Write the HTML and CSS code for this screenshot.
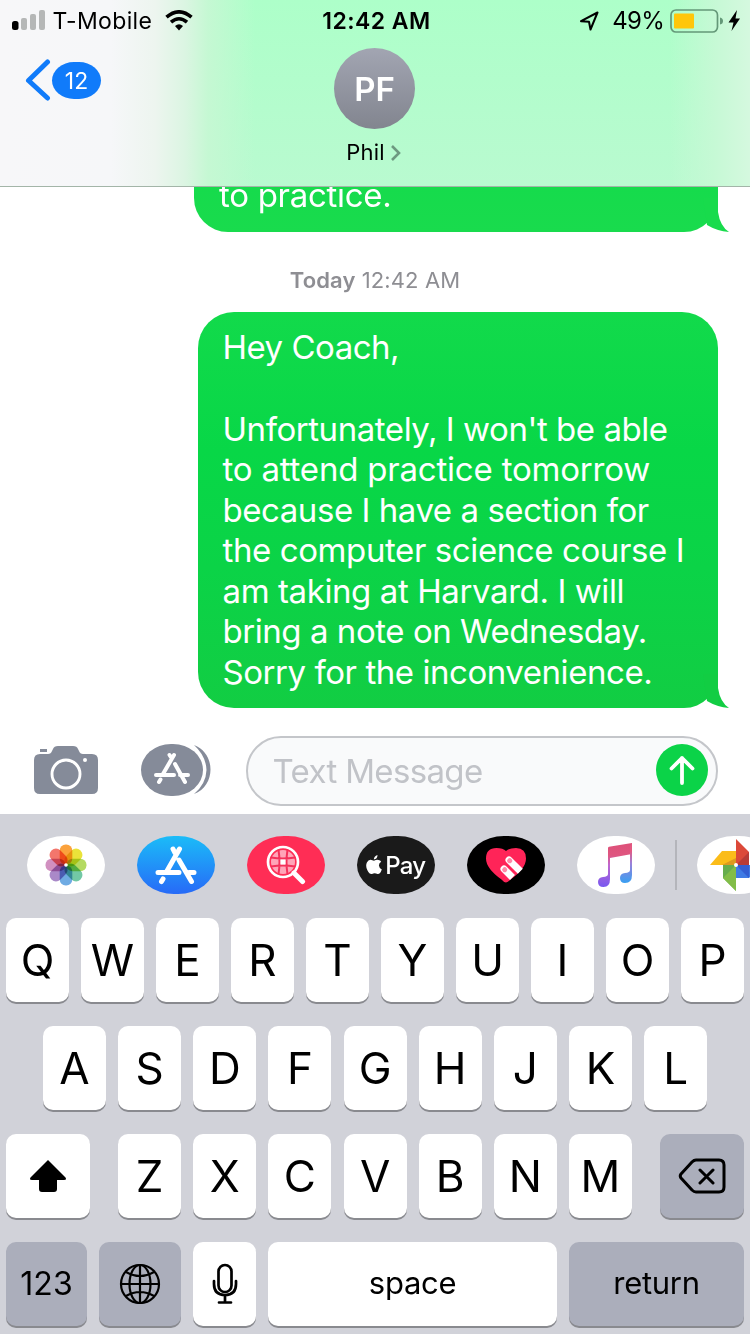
FILE: index.html
```html
<!DOCTYPE html>
<html lang="en">
<head>
<meta charset="utf-8">
<title>Phil</title>
<link rel="stylesheet" href="styles.css">
</head>
<body>
<div class="phone">
  <header class="header">
    <div class="status">
      <div class="status-left">
        <svg class="signal" width="34" height="21" viewBox="0 0 34 21"><rect x="0" y="11" width="6.500" height="9" rx="2.500" fill="#000"/><g fill="#b5b7b7"><rect x="9" y="8" width="6" height="12" rx="2"/><rect x="18" y="4" width="6" height="16" rx="2"/><rect x="27" y="0" width="6" height="20" rx="2"/></g></svg>
        <span class="carrier">T-Mobile</span>
        <svg width="28" height="21" viewBox="0 0 28 21"><g fill="none" stroke="#000" stroke-width="3.600"><path d="M1.500 7.200Q14-3.500 26.500 7.200"/><path d="M6 12.200Q14 5.300 22 12.200"/></g><path d="M10 16Q14 12.500 18 16L14 20.500Z"/></svg>
      </div>
      <span class="clock">12:42 AM</span>
      <div class="status-right">
        <svg class="location" width="19" height="20" viewBox="0 0 19 20" fill="none" stroke="#000" stroke-width="2" stroke-linejoin="round"><path d="M1 10.200 17.500 1.500 10.500 18.500 9 10.700Z"/></svg>
        <span class="percent">49%</span>
        <svg width="71" height="24" viewBox="0 0 71 24"><rect x="1" y="1" width="46.500" height="22" rx="5" fill="none" stroke="#649878" stroke-width="1.700"/><rect x="4" y="4.500" width="20" height="15" rx="1" fill="#ffc60a"/><path d="M50 8.500q3 .5 3 3.500t-3 3.500Z" fill="#649878"/><path d="M67 1 58.500 13.500H63.500L61.500 22 70 9.500H65.500Z" fill="#000"/></svg>
      </div>
    </div>
    <div class="nav">
      <div class="back">
        <svg width="26" height="43" viewBox="0 0 26 43" fill="none" stroke="#107bfa" stroke-width="5" stroke-linecap="round" stroke-linejoin="round"><path d="M22.500 3 3.500 21.500 22.500 39"/></svg>
        <span class="badge">12</span>
      </div>
      <div class="contact">
        <div class="avatar">PF</div>
        <div class="name">Phil<svg width="12" height="18" viewBox="0 0 12 18" fill="none" stroke="#6d9980" stroke-width="2.600"><path d="M2 3 9 10 2 17"/></svg></div>
      </div>
    </div>
  </header>

  <main class="thread">
    <div class="bubble previous">
      <p class="line prev-line">to practice.</p>
      <svg class="tail" width="26" height="34" viewBox="0 0 26 34"><path d="M0 0H15V14Q17 28 26 34Q14 33 4 27Z" fill="#18db4c"/></svg>
    </div>
    <div class="stamp"><b>Today</b> 12:42 AM</div>
    <div class="bubble current">
      <p class="line l1">Hey Coach,</p>
      <p class="line">&nbsp;</p>
      <p class="line">Unfortunately, I won't be able</p>
      <p class="line l3">to attend practice tomorrow</p>
      <p class="line">because I have a section for</p>
      <p class="line l5">the computer science course I</p>
      <p class="line l5">am taking at Harvard. I will</p>
      <p class="line">bring a note on Wednesday.</p>
      <p class="line">Sorry for the inconvenience.</p>
      <svg class="tail" width="26" height="34" viewBox="0 0 26 34"><path d="M0 0H15V14Q17 28 26 34Q14 33 4 27Z" fill="#12cd43"/></svg>
    </div>
  </main>

  <section class="composer">
    <svg class="camera" width="64" height="48" viewBox="0 0 64 48"><path d="M6 3h7v3H6ZM6 8h8q3 0 4-3l1-2q1-3 5-3h15q4 0 5 3l1 2q1 3 4 3h9q6 0 6 6v28q0 6-6 6H6q-6 0-6-6V14q0-6 6-6Z" fill="#858b99"/><circle cx="32" cy="28" r="14" fill="none" stroke="#fff" stroke-width="2.900"/><circle cx="51" cy="14" r="2" fill="#fff"/></svg>
    <svg class="apps" width="70" height="52" viewBox="0 0 70 52"><path d="M53 1C75 9 75 42 53 50Q65 40 65.500 26Q65 12 53 1Z" fill="#858b99"/><rect width="62" height="52" rx="30" ry="26" fill="#858b99"/><g stroke="#fff" stroke-width="4" stroke-linecap="round"><path d="M33 11 22 30M19.500 35.500 18 38M28.500 11l2 3M34 20l10 18M15 31H33M39 31H47"/></g></svg>
    <div class="field"><span class="placeholder">Text Message</span>
      <span class="send"><svg width="26" height="30" viewBox="0 0 26 30" fill="none" stroke="#fff" stroke-width="3.800" stroke-linecap="round" stroke-linejoin="round"><path d="M13 28V3M2.500 13.500 13 3l10.500 10.500"/></svg></span>
    </div>
  </section>

  <section class="keyboard">
    <div class="strip">
      <div class="app white"><svg width="42" height="42" viewBox="-21 -21 42 42"><g class="petals"><rect x="-6.300" y="-20.500" width="12.600" height="20" rx="6" fill="#fba23c"/><rect x="-6.300" y="-20.500" width="12.600" height="20" rx="6" fill="#eae33a" transform="rotate(45)"/><rect x="-6.300" y="-20.500" width="12.600" height="20" rx="6" fill="#b4da62" transform="rotate(90)"/><rect x="-6.300" y="-20.500" width="12.600" height="20" rx="6" fill="#72c8a5" transform="rotate(135)"/><rect x="-6.300" y="-20.500" width="12.600" height="20" rx="6" fill="#6fabe3" transform="rotate(180)"/><rect x="-6.300" y="-20.500" width="12.600" height="20" rx="6" fill="#aa89c8" transform="rotate(225)"/><rect x="-6.300" y="-20.500" width="12.600" height="20" rx="6" fill="#d190c0" transform="rotate(270)"/><rect x="-6.300" y="-20.500" width="12.600" height="20" rx="6" fill="#f3766c" transform="rotate(315)"/></g><circle r="1.800" fill="#fff"/></svg></div>
      <div class="app store"><svg width="42" height="40" viewBox="0 0 42 40" fill="none" stroke="#fff" stroke-width="5" stroke-linecap="round"><path d="M24.500 4 12 26M8 34 6.500 36.500M18 4l2 4M24 15l12.500 21.500M3 27.500H24M34 27.500h5"/></svg></div>
      <div class="app search"><svg width="40" height="40" viewBox="0 0 40 40"><circle cx="17" cy="17" r="15" fill="#ff2d55" stroke="#fff" stroke-width="2.700"/><circle cx="17" cy="17" r="12" fill="#ffa5b8"/><g fill="none" stroke="#f4315a" stroke-width="2"><path d="M5 12.500Q17 14.500 29 12.500M5 21.500Q17 19.500 29 21.500M12.500 5Q14.500 17 12.500 29M21.500 5Q19.500 17 21.500 29"/></g><rect x="14.500" y="14.500" width="5" height="5" fill="#fff"/><path d="m28 28 8.500 8.500" stroke="#fff" stroke-width="5" stroke-linecap="round"/></svg></div>
      <div class="app pay"><svg width="16" height="20" viewBox="0 0 16 20" fill="#fff"><path d="M11.500 0Q11.500 4 7.800 4.500Q8 1.200 11.500 0ZM8 5.800Q10.500 4.300 12.500 4.900Q14.300 5.200 15.200 6.700Q12.700 8.200 13 10.800Q13.200 13.400 15.800 14.400Q14 19.500 11.500 19Q8.500 17.700 6 19Q3.500 19.500 1.500 15.500Q-.8 11 .9 7.500Q2.500 4.300 5.500 5Z"/></svg><span>Pay</span></div>
      <div class="app black"><svg width="42" height="36" viewBox="0 0 42 36"><path d="M21 35.500Q19 35.500 16.500 32.500Q1 21.500 1 11.500Q1 1 11.500 1Q18 1 21 4Q24 1 31 1Q41 1 41 11.500Q41 21.500 25.500 32.500Q23 35.500 21 35.500Z" fill="#ff2458"/><g transform="rotate(45 24 13)"><path d="M24 9.500h16v7H24a3.500 3.500 0 0 1 0-7Z" fill="#fff"/><circle cx="25" cy="13" r="2.500" fill="#ff8aa8"/></g><g transform="rotate(45 19 22)"><path d="M19 18.500h12v7H19a3.500 3.500 0 0 1 0-7Z" fill="#fff"/><circle cx="20" cy="22" r="2.500" fill="#ff8aa8"/></g></svg></div>
      <div class="app white"><svg class="music" width="38" height="46" viewBox="0 0 38 46"><defs><linearGradient id="note" x1="0" y1="0" x2="0" y2="1"><stop offset="0" stop-color="#dd5078"/><stop offset=".28" stop-color="#df5680"/><stop offset=".5" stop-color="#be67d0"/><stop offset="1" stop-color="#7858f0"/></linearGradient><linearGradient id="note2" x1="0" y1="0" x2="0" y2="1"><stop offset=".2" stop-color="#e35982"/><stop offset=".5" stop-color="#9c80d8"/><stop offset="1" stop-color="#389ff2"/></linearGradient></defs><path d="M12 6Q12 5 13 4.800L36 1V12L14 16V37Q14 45 7.500 45Q2 45 2 40Q2 35.500 7 35Q12 34.500 12 32Z" fill="url(#note)"/><path d="M36 1V33Q36 41 29 41Q24 41 24 36Q24 31.500 29 31Q34 30.500 34 28V4Z" fill="url(#note2)"/></svg></div>
      <div class="divider"></div>
      <div class="app white photos"><svg width="54" height="54" viewBox="0 0 54 54"><path d="M27 1v26h13V14Z" fill="#dc4939"/><path d="M27 27 40 14v13Z" fill="#b83b36"/><path d="M1 27 13 13h14v14Z" fill="#fbbc19"/><path d="M13 27 27 20v7Z" fill="#dc9920"/><path d="M27 27v26L14 40V27Z" fill="#66ad4d"/><path d="M14 40 27 27v26Z" fill="#82bd48"/><path d="M27 27h26L40 40H27Z" fill="#3f7be5"/><path d="M27 27h13v13Z" fill="#335ed2"/><circle cx="27" cy="27" r="2" fill="#fff"/></svg></div>
    </div>
    <div class="keys">
      <div class="row"><span class="key">Q</span><span class="key">W</span><span class="key">E</span><span class="key">R</span><span class="key">T</span><span class="key">Y</span><span class="key">U</span><span class="key">I</span><span class="key">O</span><span class="key">P</span></div>
      <div class="row middle"><span class="key">A</span><span class="key">S</span><span class="key">D</span><span class="key">F</span><span class="key">G</span><span class="key">H</span><span class="key">J</span><span class="key">K</span><span class="key">L</span></div>
      <div class="row lower">
        <span class="key wide"><svg width="38" height="34" viewBox="0 0 38 34"><path d="M19 1 36.500 18.500Q38 21 35 21H28V30Q28 33 25 33H13Q10 33 10 30V21H3Q0 21 1.500 18.500Z"/></svg></span>
        <div class="letters"><span class="key">Z</span><span class="key">X</span><span class="key">C</span><span class="key">V</span><span class="key">B</span><span class="key">N</span><span class="key">M</span></div>
        <span class="key wide gray"><svg width="48" height="36" viewBox="0 0 48 36" fill="none" stroke="#000" stroke-width="3" stroke-linecap="round" stroke-linejoin="round"><path d="M18 2H41Q46 2 46 7V29Q46 34 41 34H18Q16 34 14 32L3 20Q1.500 18 3 16L14 4Q16 2 18 2ZM22 12 35 25M35 12 22 25"/></svg></span>
      </div>
      <div class="row">
        <span class="key gray numbers">123</span>
        <span class="key gray globe"><svg width="42" height="42" viewBox="0 0 42 42" fill="none" stroke="#000" stroke-width="2.200"><circle cx="21" cy="21" r="19"/><ellipse cx="21" cy="21" rx="10.500" ry="19"/><path d="M21 2V40M2 21H40M7 9Q21 17 35 9M7 33Q21 25 35 33"/></svg></span>
        <span class="key mic"><svg width="26" height="42" viewBox="0 0 26 42" fill="none" stroke="#000" stroke-width="2.700" stroke-linecap="round"><rect x="6.500" y="2" width="13" height="27" rx="6.500"/><path d="M2 18V21Q2 32 13 32Q24 32 24 21V18M13 32V39M7 39.500H19"/></svg></span>
        <span class="key word space">space</span>
        <span class="key gray word return">return</span>
      </div>
    </div>
  </section>
</div>
</body>
</html>
```
FILE: styles.css
```css
* { box-sizing: border-box; }
body { margin: 0; font-family: Inter, "Liberation Sans", sans-serif; color: #000; }
svg { display: block; flex: none; }
.phone { width: 750px; height: 1334px; display: flex; flex-direction: column; overflow: hidden; background: #fff; }

.header {
  height: 187px; flex: none; border-bottom: 1px solid #a3b5a8;
  background:
    linear-gradient(90deg, #f7f7f9 0, #f6f7f9 110px, #edf5ef 155px, #dbf5e2 185px, #c5f8d3 208px, rgba(184,250,207,0) 255px, rgba(184,250,207,0) 670px, #c6f9d5 715px, #d5f9df 750px),
    linear-gradient(#adffc9, #b9fad0);
}
.status { height: 41px; display: grid; grid-template-columns: 1fr auto 1fr; align-items: center; padding: 0 9px 0 12px; }
.status-left, .status-right { display: flex; align-items: center; }
.status-right { justify-content: flex-end; }
.carrier { font-size: 23px; margin: 0 13px 0 6.500px; letter-spacing: .35px; }
.clock { font-size: 23px; font-weight: 600; letter-spacing: .45px; }
.percent { font-size: 24px; margin: 0 6px 0 13px; letter-spacing: -.7px; }
.nav { display: grid; grid-template-columns: 1fr 1fr 1fr; padding: 7px 0 0; }
.back { display: flex; align-items: center; height: 43px; margin-top: 11px; padding-left: 25px; gap: 1px; }
.badge { width: 49px; height: 37px; border-radius: 22px / 18.5px; background: #107bfa; color: #fff; font-size: 23px; line-height: 38px; text-align: center; }
.contact { display: flex; flex-direction: column; align-items: center; padding-right: 1px; }
.avatar { width: 81px; height: 81px; border-radius: 50%; background: linear-gradient(#a2a5b2, #82858f); color: #fff; font-size: 33px; font-weight: 600; line-height: 82px; text-align: center; }
.name { display: flex; align-items: center; gap: 5px; margin: 8px 1px 0 0; font-size: 22px; line-height: 30px; letter-spacing: .2px; }

.thread { height: 533px; flex: none; display: flex; flex-direction: column; align-items: flex-end; padding-right: 32px; }
.bubble { position: relative; color: #fff; }
.line { margin: 0; font-size: 33px; line-height: 40.55px; letter-spacing: -.45px; white-space: nowrap; }
.l1 { letter-spacing: -.5px; margin-top: -.5px; margin-bottom: .5px; }
.l3 { letter-spacing: -.2px; }
.l5 { letter-spacing: -.4px; }
.previous { width: 524px; height: 45px; border-radius: 0 0 34px 34px; background: linear-gradient(#16db4c, #19db4d); padding-left: 25px; clip-path: inset(0 -20px 0 0); }
.prev-line { margin-top: -12px; letter-spacing: -.3px; }
.stamp { width: 750px; margin: 32px -32px 0 0; text-align: center; font-size: 22px; line-height: 32px; color: #8e8e93; letter-spacing: .1px; }
.stamp b { font-weight: 600; }
.current { width: 520px; height: 396px; margin-top: 16px; border-radius: 36px 36px 34px 36px; padding: 15.500px 0 0 24.500px; background: linear-gradient(#12da4b, #08d747 35%, #0bd347 65%, #12cd43); }
.tail { position: absolute; right: -11px; bottom: 0; }

.composer { height: 94px; flex: none; display: flex; align-items: center; padding: 8px 32px 0 34px; }
.camera { margin-top: -2px; }
.apps { margin: -2px 0 0 43px; }
.field { width: 472px; height: 70px; margin-left: 35px; border: 2px solid #c4c6ca; border-radius: 35px; background: #f9fafb; display: flex; align-items: center; justify-content: space-between; padding: 0 8px 0 24.500px; }
.placeholder { font-size: 33px; color: #c1c3c8; letter-spacing: -.65px; }
.send { width: 52px; height: 52px; margin-top: -2px; border-radius: 50%; background: #0bd348; display: grid; place-items: center; }

.keyboard { height: 520px; flex: none; background: #d1d2d9; padding-top: 22px; }
.strip { height: 58px; display: flex; align-items: center; padding-left: 26.500px; gap: 31.500px; overflow: hidden; }
.app { width: 78.500px; height: 58px; flex: none; border-radius: 37px / 29px; display: flex; align-items: center; justify-content: center; background: #fff; }
.petals rect { mix-blend-mode: multiply; }
.store { background: linear-gradient(#1bbcf8, #276af7); }
.search { background: #ff2d55; }
.pay { background: #1a1a1a; color: #fff; gap: 3px; font-size: 24px; font-weight: 500; letter-spacing: -.8px; }
.black { background: #000; }
.music { margin-left: -2px; }
.divider { width: 2px; height: 50px; margin: 0 -11.500px; background: #b4b5bb; flex: none; }
.photos { justify-content: flex-start; padding-left: 12px; }
.keys { display: grid; gap: 24px; padding: 24px 6px 0; }
.row { height: 84px; display: flex; gap: 12px; }
.middle { padding: 0 37px; gap: 12.150px; }
.lower { justify-content: space-between; }
.letters { display: flex; gap: 12.150px; }
.key { width: 63px; height: 84px; flex: none; border-radius: 10px; background: #fff; box-shadow: 0 2px 0 #898a8f; font-size: 44px; display: flex; align-items: center; justify-content: center; padding-bottom: 1px; }
.wide { width: 84px; }
.gray { background: #abaebb; }
.numbers { width: 81px; font-size: 32px; }
.globe { width: 82px; }
.word { font-size: 31px; padding-bottom: 3px; letter-spacing: -.3px; }
.space { width: 289px; }
.return { width: 175px; }
```
